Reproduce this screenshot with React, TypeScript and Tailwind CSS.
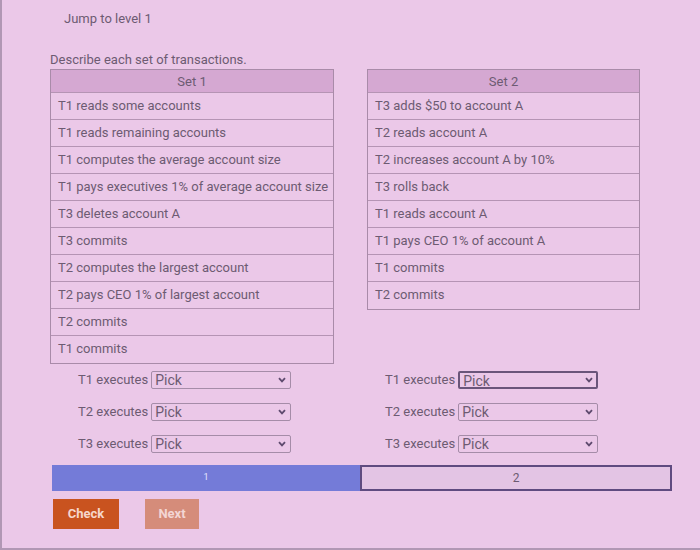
import React from "react";

const set1 = [
  "T1 reads some accounts",
  "T1 reads remaining accounts",
  "T1 computes the average account size",
  "T1 pays executives 1% of average account size",
  "T3 deletes account A",
  "T3 commits",
  "T2 computes the largest account",
  "T2 pays CEO 1% of largest account",
  "T2 commits",
  "T1 commits",
];

const set2 = [
  "T3 adds $50 to account A",
  "T2 reads account A",
  "T2 increases account A by 10%",
  "T3 rolls back",
  "T1 reads account A",
  "T1 pays CEO 1% of account A",
  "T1 commits",
  "T2 commits",
];

function Table({ title, rows, width }: { title: string; rows: string[]; width: string }) {
  return (
    <div className={`${width} border border-[#a98ba9]`}>
      <div className="h-[23px] bg-[#d5a8d2] text-center leading-[23px] border-b border-[#b594b4]">{title}</div>
      {rows.map((r, i) => (
        <div
          key={i}
          className={`h-[27px] leading-[26px] pl-[7px] whitespace-nowrap ${i < rows.length - 1 ? "border-b border-[#b594b4]" : ""}`}
        >
          {r}
        </div>
      ))}
    </div>
  );
}

function Pick({ label, focused }: { label: string; focused?: boolean }) {
  return (
    <div className="flex items-center h-[18px] gap-[3px]">
      <span className="whitespace-nowrap">{label}</span>
      <div className="relative w-[140px] h-[18px]">
        <select
          defaultValue="Pick"
          className={`appearance-none w-full h-full bg-transparent pl-[3px] leading-[16px] text-[14px] text-[#6d5b72] rounded-[2px] outline-none ${
            focused ? "border-2 border-[#6a557a]" : "border border-[#a58ca8]"
          }`}
          style={{ fontFamily: "Roboto, sans-serif" }}
        >
          <option>Pick</option>
        </select>
        <svg
          className="absolute right-[5px] top-[6px] pointer-events-none"
          width="8"
          height="6"
          viewBox="0 0 8 6"
        >
          <path d="M1 1.2 L4 4.4 L7 1.2" fill="none" stroke="#5e4a6e" strokeWidth="1.8" />
        </svg>
      </div>
    </div>
  );
}

export default function App() {
  return (
    <div
      className="w-[700px] h-[550px] bg-[#ebc8e8] text-[#6d5b72] text-[13px] overflow-hidden border-l-2 border-b-2 border-[#b197b4]"
      style={{ fontFamily: "Roboto, 'Liberation Sans', sans-serif" }}
    >
      <div className="pl-[62px] pt-[11px] leading-[16px]">Jump to level 1</div>
      <div className="pl-[48px] pt-[25px] leading-[16px]">Describe each set of transactions.</div>
      <div className="pl-[48px] pt-[1px] flex gap-[33px] items-start">
        <Table title="Set 1" rows={set1} width="w-[284px]" />
        <Table title="Set 2" rows={set2} width="w-[273px]" />
      </div>
      <div className="flex pt-[7px]">
        <div className="pl-[76px] w-[383px] flex flex-col gap-[14px]">
          <Pick label="T1 executes" />
          <Pick label="T2 executes" />
          <Pick label="T3 executes" />
        </div>
        <div className="flex flex-col gap-[14px]">
          <Pick label="T1 executes" focused />
          <Pick label="T2 executes" />
          <Pick label="T3 executes" />
        </div>
      </div>
      <div className="flex ml-[50px] mt-[12px] h-[26px]">
        <div className="w-[308px] bg-[#747bd8] flex items-center justify-center text-[9px] text-[#e8e6ff]">1</div>
        <div className="w-[312px] border-2 border-[#5f4b80] bg-[#e3c4e4] flex items-center justify-center text-[12px]">2</div>
      </div>
      <div className="flex ml-[51px] mt-[8px] gap-[26px]">
        <button className="w-[66px] h-[30px] bg-[#c9531f] text-[#f6d7cc] font-bold text-[13px]">Check</button>
        <button className="w-[54px] h-[30px] bg-[#d58c7a] text-[#f3d6d4] font-bold text-[13px]">Next</button>
      </div>
    </div>
  );
}
